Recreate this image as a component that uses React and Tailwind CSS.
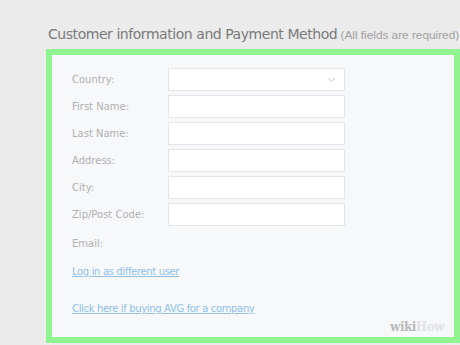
import React from 'react';

const fields = ['Country:', 'First Name:', 'Last Name:', 'Address:', 'City:', 'Zip/Post Code:'];

const Chevron = () => (
  <svg width="9" height="6" viewBox="0 0 9 6" className="text-[#c4c8cc]">
    <path d="M1 1l3.5 3.5L8 1" fill="none" stroke="currentColor" strokeWidth="1" />
  </svg>
);

const App = () => {
  return (
    <div className="w-[460px] h-[345px] overflow-hidden bg-[#ebebeb] font-['DejaVu_Sans',sans-serif]">
      <div className="pl-[48px] pt-[22px] h-[49px] whitespace-nowrap">
        <span className="text-[14px] text-[#7a7a7a] tracking-[-0.45px]">Customer information and Payment Method</span>
        <span className="font-['Liberation_Sans',sans-serif] text-[11.8px] text-[#a0a0a0]"> (All fields are required)</span>
      </div>
      <div className="ml-[46px] w-[414px] h-[294px] border-[6px] border-[#90f590] bg-[#f7f8fa] pl-[20px] pt-[13px]">
        <div className="grid grid-cols-[96px_177px] gap-y-[4px]">
          {fields.map((label, i) => (
            <React.Fragment key={label}>
              <div className="h-[23px] flex items-center text-[10px] text-[#b0b0b0]">{label}</div>
              <div className="h-[23px] bg-white border border-[#e3e5e8] flex items-center justify-end pr-[8px]">
                {i === 0 && <Chevron />}
              </div>
            </React.Fragment>
          ))}
          <div className="h-[23px] mt-[2px] flex items-center text-[10px] text-[#b0b0b0]">Email:</div>
          <div />
        </div>
        <div className="mt-[9px] text-[10px] text-[#8ec0e8] underline tracking-[-0.35px]">Log in as different user</div>
        <div className="mt-[22px] text-[10px] text-[#8ec0e8] underline tracking-[-0.35px]">Click here if buying AVG for a company</div>
        <div className="mt-[2px] pr-[10px] flex justify-end font-['DejaVu_Serif',serif] text-[12px] font-bold tracking-[-0.5px]">
          <span className="text-[#b8b8b8]">wiki</span>
          <span className="text-[#e0e2e4]">How</span>
        </div>
      </div>
    </div>
  );
};

export default App;
